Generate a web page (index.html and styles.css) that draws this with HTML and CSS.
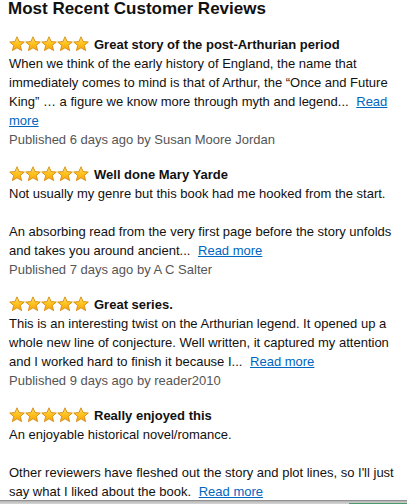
FILE: index.html
```html
<!DOCTYPE html>
<html>
<head>
<meta charset="utf-8">
<link rel="stylesheet" href="styles.css">
</head>
<body>
<svg width="0" height="0" class="defs">
  <defs>
    <linearGradient id="g" x1="0" y1="0" x2="0" y2="1">
      <stop offset="0" stop-color="#FFE27A"/>
      <stop offset="0.5" stop-color="#FFC21C"/>
      <stop offset="1" stop-color="#F5A20F"/>
    </linearGradient>
    <symbol id="star" viewBox="0 0 16 16">
      <polygon points="8,0.8 10.1,5.6 15.3,6 11.3,9.4 12.6,14.6 8,11.8 3.4,14.6 4.7,9.4 0.7,6 5.9,5.6" fill="url(#g)" stroke="#D68A0C" stroke-width="0.9" stroke-linejoin="round"/>
    </symbol>
  </defs>
</svg>
<div class="page">
  <h1 class="heading">Most Recent Customer Reviews</h1>

  <div class="review">
    <div class="head">
      <span class="stars"><svg><use href="#star"/></svg><svg><use href="#star"/></svg><svg><use href="#star"/></svg><svg><use href="#star"/></svg><svg><use href="#star"/></svg></span>
      <span class="title">Great story of the post-Arthurian period</span>
    </div>
    <div class="text">When we think of the early history of England, the name that immediately comes to mind is that of Arthur, the “Once and Future King” … a figure we know more through myth and legend... <a class="more" href="#">Read more</a></div>
    <div class="meta">Published 6 days ago by Susan Moore Jordan</div>
  </div>

  <div class="review">
    <div class="head">
      <span class="stars"><svg><use href="#star"/></svg><svg><use href="#star"/></svg><svg><use href="#star"/></svg><svg><use href="#star"/></svg><svg><use href="#star"/></svg></span>
      <span class="title">Well done Mary Yarde</span>
    </div>
    <div class="text">Not usually my genre but this book had me hooked from the start.<br><br>An absorbing read from the very first page before the story unfolds and takes you around ancient... <a class="more" href="#">Read more</a></div>
    <div class="meta">Published 7 days ago by A C Salter</div>
  </div>

  <div class="review">
    <div class="head">
      <span class="stars"><svg><use href="#star"/></svg><svg><use href="#star"/></svg><svg><use href="#star"/></svg><svg><use href="#star"/></svg><svg><use href="#star"/></svg></span>
      <span class="title">Great series.</span>
    </div>
    <div class="text">This is an interesting twist on the Arthurian legend. It opened up a whole new line of conjecture. Well written, it captured my attention and I worked hard to finish it because I... <a class="more" href="#">Read more</a></div>
    <div class="meta">Published 9 days ago by reader2010</div>
  </div>

  <div class="review">
    <div class="head">
      <span class="stars"><svg><use href="#star"/></svg><svg><use href="#star"/></svg><svg><use href="#star"/></svg><svg><use href="#star"/></svg><svg><use href="#star"/></svg></span>
      <span class="title">Really enjoyed this</span>
    </div>
    <div class="text">An enjoyable historical novel/romance.<br><br>Other reviewers have fleshed out the story and plot lines, so I'll just say what I liked about the book. <a class="more" href="#">Read more</a></div>
  </div>
</div>
<div class="bottom-bar"><span class="green"></span></div>
</body>
</html>
```
FILE: styles.css
```css
html, body {
  margin: 0;
  padding: 0;
  background: #fff;
}
body {
  font-family: "Liberation Sans", Arial, sans-serif;
  color: #111;
  overflow: hidden;
}
.defs {
  position: absolute;
  width: 0;
  height: 0;
}
.page {
  width: 390px;
  padding-left: 9px;
}
.heading {
  margin: 0;
  font-size: 17px;
  line-height: 18px;
  font-weight: bold;
  color: #111;
  margin-left: -1px;
}
.review {
  margin-top: 15px;
  font-size: 13px;
  line-height: 19px;
}
.review:first-of-type {
  margin-top: 16px;
}
.head {
  display: flex;
  align-items: center;
  height: 20px;
}
.stars {
  display: flex;
  width: 80px;
  margin-right: 5px;
}
.stars svg {
  width: 16px;
  height: 16px;
  display: block;
}
.title {
  font-weight: bold;
  font-size: 13px;
  color: #111;
}
.text {
  color: #111;
}
.more {
  margin-left: 4px;
  color: #0066c0;
  text-decoration: underline;
}
.meta {
  color: #555;
}
.bottom-bar {
  position: fixed;
  left: 0;
  right: 0;
  bottom: 0;
  height: 4px;
  background: linear-gradient(#7d7d7d, #bdbdbd 40%, #d6d6d6);
}
.green {
  position: absolute;
  right: 0;
  bottom: 0;
  width: 58px;
  height: 1px;
  background: #4c9a6a;
}
```
